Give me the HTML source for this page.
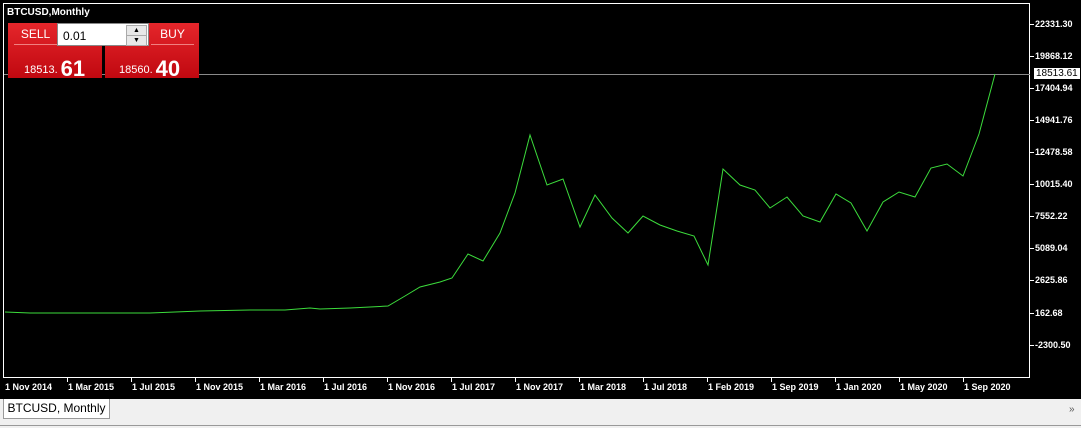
<!DOCTYPE html>
<html><head><style>
body{margin:0;width:1081px;height:428px;overflow:hidden;background:#f0f0f0;font-family:"Liberation Sans",sans-serif;position:relative}
#chart{position:absolute;left:0;top:0;width:1081px;height:399px;background:#000}
.t{position:absolute;color:#fff;font-size:9px;font-weight:bold;white-space:nowrap}
.btn{position:absolute;background:linear-gradient(#e5262b,#c00810);color:#fff}
</style></head><body>
<div id="chart">
<svg width="1081" height="399" style="position:absolute;left:0;top:0">
<rect x="3.5" y="3.5" width="1026" height="374" fill="none" stroke="#fff"/>
<line x1="4" y1="74.5" x2="1030" y2="74.5" stroke="#8a8a8a"/>
<g stroke="#fff">
<line x1="1030" y1="24.5" x2="1034" y2="24.5"/><line x1="1030" y1="56.5" x2="1034" y2="56.5"/><line x1="1030" y1="88.5" x2="1034" y2="88.5"/><line x1="1030" y1="120.5" x2="1034" y2="120.5"/><line x1="1030" y1="152.5" x2="1034" y2="152.5"/><line x1="1030" y1="184.5" x2="1034" y2="184.5"/><line x1="1030" y1="216.5" x2="1034" y2="216.5"/><line x1="1030" y1="248.5" x2="1034" y2="248.5"/><line x1="1030" y1="280.5" x2="1034" y2="280.5"/><line x1="1030" y1="313.5" x2="1034" y2="313.5"/><line x1="1030" y1="345.5" x2="1034" y2="345.5"/>
<line x1="67.5" y1="378" x2="67.5" y2="382"/><line x1="131.5" y1="378" x2="131.5" y2="382"/><line x1="195.5" y1="378" x2="195.5" y2="382"/><line x1="259.5" y1="378" x2="259.5" y2="382"/><line x1="323.5" y1="378" x2="323.5" y2="382"/><line x1="387.5" y1="378" x2="387.5" y2="382"/><line x1="451.5" y1="378" x2="451.5" y2="382"/><line x1="515.5" y1="378" x2="515.5" y2="382"/><line x1="579.5" y1="378" x2="579.5" y2="382"/><line x1="643.5" y1="378" x2="643.5" y2="382"/><line x1="707.5" y1="378" x2="707.5" y2="382"/><line x1="771.5" y1="378" x2="771.5" y2="382"/><line x1="835.5" y1="378" x2="835.5" y2="382"/><line x1="899.5" y1="378" x2="899.5" y2="382"/><line x1="963.5" y1="378" x2="963.5" y2="382"/>
</g>
<polyline fill="none" stroke="#3cdc3c" stroke-width="1" points="5,312 30,313 60,313 100,313 150,313 200,311 250,310 285,310 310,308 320,309 350,308 370,307 388,306 405,296 420,287 440,282 452,278 468,254 483,261 500,233 515,193 530,135 547,185 563,179 580,227 595,195 612,218 628,233 643,216 660,225 677,231 694,236 708,265 723,169 740,185 755,190 770,208 787,197 803,216 820,222 836,194 851,203 867,231 883,202 899,192 915,197 931,168 947,164 963,176 979,134 995,74"/>
</svg>
<div class="t" style="left:1035px;top:19px">22331.30</div>
<div class="t" style="left:1035px;top:51px">19868.12</div>
<div class="t" style="left:1034px;top:68px;background:#fff;color:#000;padding:0 2px;font-weight:normal;font-size:10px">18513.61</div>
<div class="t" style="left:1035px;top:83px">17404.94</div>
<div class="t" style="left:1035px;top:115px">14941.76</div>
<div class="t" style="left:1035px;top:147px">12478.58</div>
<div class="t" style="left:1035px;top:179px">10015.40</div>
<div class="t" style="left:1035px;top:211px">7552.22</div>
<div class="t" style="left:1035px;top:243px">5089.04</div>
<div class="t" style="left:1035px;top:275px">2625.86</div>
<div class="t" style="left:1035px;top:308px">162.68</div>
<div class="t" style="left:1035px;top:340px">-2300.50</div>
<div class="t" style="left:5px;top:382px">1 Nov 2014</div>
<div class="t" style="left:68px;top:382px">1 Mar 2015</div>
<div class="t" style="left:132px;top:382px">1 Jul 2015</div>
<div class="t" style="left:196px;top:382px">1 Nov 2015</div>
<div class="t" style="left:260px;top:382px">1 Mar 2016</div>
<div class="t" style="left:324px;top:382px">1 Jul 2016</div>
<div class="t" style="left:388px;top:382px">1 Nov 2016</div>
<div class="t" style="left:452px;top:382px">1 Jul 2017</div>
<div class="t" style="left:516px;top:382px">1 Nov 2017</div>
<div class="t" style="left:580px;top:382px">1 Mar 2018</div>
<div class="t" style="left:644px;top:382px">1 Jul 2018</div>
<div class="t" style="left:708px;top:382px">1 Feb 2019</div>
<div class="t" style="left:772px;top:382px">1 Sep 2019</div>
<div class="t" style="left:836px;top:382px">1 Jan 2020</div>
<div class="t" style="left:900px;top:382px">1 May 2020</div>
<div class="t" style="left:964px;top:382px">1 Sep 2020</div>
<div class="t" style="left:7px;top:7px;font-size:10px">BTCUSD,Monthly</div>
<div class="btn" style="left:8px;top:23px;width:94px;height:55px">
 <div style="position:absolute;left:6px;top:4px;width:43px;text-align:center;font-size:12px;border-bottom:1px solid #f08080;padding-bottom:3px">SELL</div>
 <div style="position:absolute;left:16px;top:30px;font-size:11px">18513.<span style="font-size:22px;font-weight:bold;margin-left:3px;position:relative;top:3px">61</span></div>
</div>
<div class="btn" style="left:105px;top:23px;width:94px;height:55px">
 <div style="position:absolute;left:46px;top:4px;width:43px;text-align:center;font-size:12px;border-bottom:1px solid #f08080;padding-bottom:3px">BUY</div>
 <div style="position:absolute;left:14px;top:30px;font-size:11px">18560.<span style="font-size:22px;font-weight:bold;margin-left:3px;position:relative;top:3px">40</span></div>
</div>
<div style="position:absolute;left:57px;top:23px;width:92px;height:23px;background:#fff;border:1px solid #888;box-sizing:border-box;font-size:12px;color:#000;padding:5px 0 0 5px">0.01
 <div style="position:absolute;right:1px;top:1px;width:19px;height:9px;background:#e8e8e8;border:1px solid #aaa;font-size:7px;text-align:center;line-height:9px">▲</div>
 <div style="position:absolute;right:1px;top:11px;width:19px;height:9px;background:#e8e8e8;border:1px solid #aaa;font-size:7px;text-align:center;line-height:9px">▼</div>
</div>
</div>
<div style="position:absolute;left:3px;top:399px;width:105px;height:19px;background:#fff;border:1px solid #999;border-top:none;font-size:12px;color:#000;text-align:center;line-height:18px">BTCUSD, Monthly</div>
<div style="position:absolute;left:1069px;top:404px;font-size:10px;color:#555">»</div>
<div style="position:absolute;left:0;top:425px;width:1081px;height:1px;background:#999"></div>
</body></html>
